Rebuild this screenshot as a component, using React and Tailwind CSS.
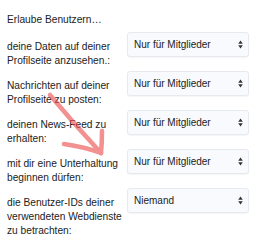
import React from "react";

const rows = [
  { label: ["deine Daten auf deiner", "Profilseite anzusehen.:"], value: "Nur für Mitglieder" },
  { label: ["Nachrichten auf deiner", "Profilseite zu posten:"], value: "Nur für Mitglieder" },
  { label: ["deinen News-Feed zu", "erhalten:"], value: "Nur für Mitglieder" },
  { label: ["mit dir eine Unterhaltung", "beginnen dürfen:"], value: "Nur für Mitglieder" },
  { label: ["die Benutzer-IDs deiner", "verwendeten Webdienste", "zu betrachten:"], value: "Niemand" },
];

function Sort() {
  return (
    <svg width="5" height="9" viewBox="0 0 5 9" className="shrink-0">
      <path d="M2.5 0.5 L4.8 3.8 L0.2 3.8 Z" fill="#333" />
      <path d="M2.5 8.5 L4.8 5.2 L0.2 5.2 Z" fill="#333" />
    </svg>
  );
}

export default function App() {
  return (
    <div
      className="relative w-[255px] h-[250px] bg-white text-[#222] overflow-hidden"
      style={{ fontFamily: '"Liberation Sans", Arial, sans-serif' }}
    >
      <div className="pl-[7px] pt-[13px] text-[10.2px] leading-[14px]">Erlaube Benutzern…</div>
      <div className="flex flex-col gap-[3px] pt-[5px]">
        {rows.map((r, i) => (
          <div key={i} className="flex items-start">
            <div className="w-[120px] shrink-0 pl-[7px] pt-[8px] text-[10.2px] leading-[14px]">
              {r.label.map((l, j) => (
                <div key={j} className="whitespace-nowrap">{l}</div>
              ))}
            </div>
            <div className="ml-[7px] w-[122px] h-[25px] flex items-center justify-between pl-[6px] pr-[5px] rounded-[3px] border border-[#e6e9ed] bg-[#f8fafd] shadow-[0_1px_1px_rgba(0,0,0,0.04)] text-[10px]">
              <span>{r.value}</span>
              <Sort />
            </div>
          </div>
        ))}
      </div>
      <svg className="absolute left-0 top-0 pointer-events-none" width="255" height="250">
        <g stroke="#ec4d4d" strokeWidth="4.5" strokeLinecap="round" fill="none" opacity="0.62">
          <path d="M50 95 Q 75 125 101 153" />
          <path d="M64 144 Q 85 147 101 153" />
          <path d="M102 131 Q 102 143 101 153" />
        </g>
      </svg>
    </div>
  );
}
